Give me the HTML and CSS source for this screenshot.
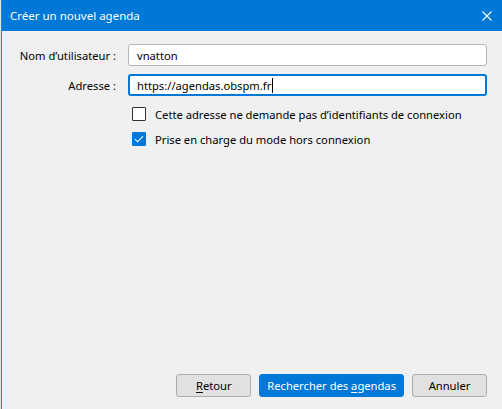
FILE: index.html
```html
<!DOCTYPE html>
<html lang="fr">
<head>
<meta charset="utf-8">
<link rel="stylesheet" href="styles.css">
</head>
<body>
<div class="window">
  <div class="titlebar">
    <span class="title">Créer un nouvel agenda</span>
    <svg class="close" width="10" height="10" viewBox="0 0 10 10"><path d="M0.5 0.5 L9.5 9.5 M9.5 0.5 L0.5 9.5" stroke="#fff" stroke-width="1.1" fill="none"/></svg>
  </div>
  <div class="content">
    <div class="form">
      <label class="label">Nom d’utilisateur :</label>
      <div class="input">vnatton</div>
      <label class="label">Adresse :</label>
      <div class="input focused">https://agendas.obspm.fr<span class="caret"></span></div>
      <div></div>
      <div class="checks">
        <div class="check"><span class="box"></span><span>Cette adresse ne demande pas d’identifiants de connexion</span></div>
        <div class="check"><span class="box checked"><svg width="14" height="14" viewBox="0 0 14 14"><path d="M3 7.2 L5.6 9.8 L11 4.2" stroke="#fff" stroke-width="1.1" fill="none"/></svg></span><span>Prise en charge du mode hors connexion</span></div>
      </div>
    </div>
    <div class="buttons">
      <button class="btn"><u>R</u>etour</button>
      <button class="btn primary">Rechercher des <u>a</u>gendas</button>
      <button class="btn">Annuler</button>
    </div>
  </div>
</div>
</body>
</html>
```
FILE: styles.css
```css
html, body {
  margin: 0;
  padding: 0;
}
body {
  width: 502px;
  height: 409px;
  background: #e4e4e4;
  padding-left: 1px;
  box-sizing: border-box;
  font-family: "Noto Sans", "Segoe UI", sans-serif;
  font-size: 11.2px;
  color: #000;
  overflow: hidden;
}
.window {
  height: 409px;
  background: #f0f0f0;
  border-left: 1px solid #2a7fd2;
  display: flex;
  flex-direction: column;
}
.titlebar {
  height: 31px;
  flex: 0 0 31px;
  background: #0078d7;
  color: #fff;
  display: flex;
  align-items: center;
  justify-content: space-between;
  padding: 0 10px 1px 8px;
  box-sizing: border-box;
}
.title {
  font-size: 11.5px;
}
.close {
  display: block;
  margin-top: 1px;
}
.content {
  flex: 1;
  display: flex;
  flex-direction: column;
  justify-content: space-between;
  padding: 13px 15px 12px 10px;
}
.form {
  display: grid;
  grid-template-columns: 104px 1fr;
  column-gap: 12px;
  row-gap: 8px;
  align-items: center;
}
.label {
  text-align: right;
  white-space: nowrap;
}
.input {
  height: 22px;
  box-sizing: border-box;
  background: #fff;
  border: 1px solid #b4b4b4;
  border-radius: 3px;
  padding: 0 8px;
  display: flex;
  align-items: center;
}
.input.focused {
  border: 2px solid #0078d7;
  padding: 0 7px;
}
.caret {
  display: inline-block;
  width: 1px;
  height: 15px;
  background: #000;
  margin-left: 1px;
}
.checks {
  display: flex;
  flex-direction: column;
  gap: 11px;
  padding: 3px 0 0 4px;
}
.check {
  display: flex;
  align-items: center;
  gap: 9px;
  height: 14px;
}
.box {
  width: 14px;
  height: 14px;
  box-sizing: border-box;
  border: 1px solid #333;
  background: #fff;
  border-radius: 1px;
  display: block;
}
.box.checked {
  background: #0078d7;
  border-color: #0078d7;
}
.box svg {
  display: block;
  margin: -1px;
}
.buttons {
  display: flex;
  justify-content: flex-end;
  gap: 8px;
}
.btn {
  font-family: "Noto Sans", "Segoe UI", sans-serif;
  font-size: 11.2px;
  height: 23px;
  box-sizing: border-box;
  min-width: 75px;
  padding: 0 7px;
  background: #e1e1e1;
  border: 1px solid #adadad;
  border-radius: 3px;
  color: #000;
}
.btn.primary {
  background: #0078d7;
  border-color: #0078d7;
  color: #fff;
}
u {
  text-decoration-thickness: 1px;
  text-underline-offset: 2px;
}
```
